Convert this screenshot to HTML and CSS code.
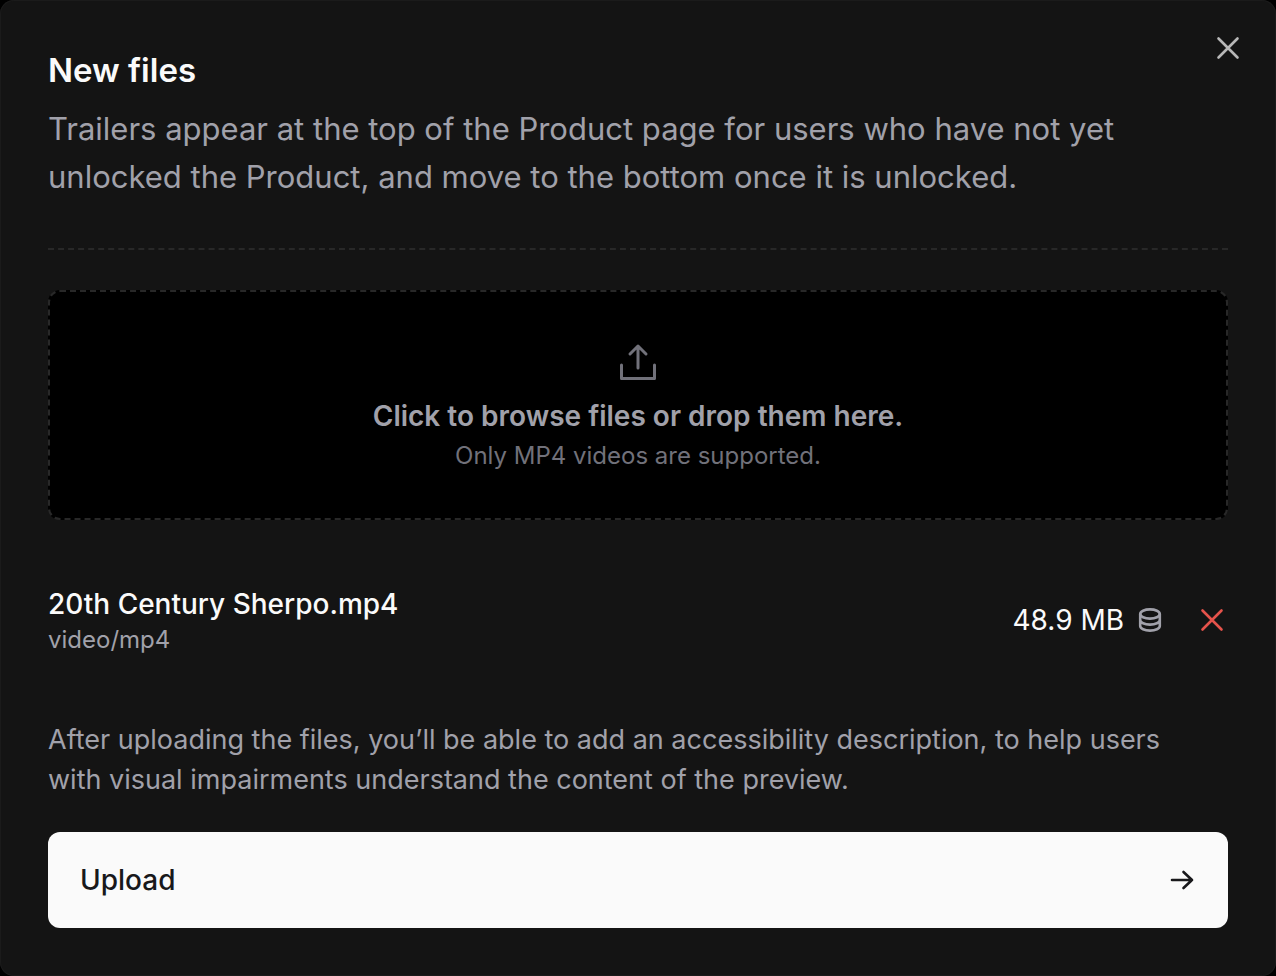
FILE: index.html
```
<!DOCTYPE html>
<html lang="en">
<head>
    <meta charset="UTF-8">
    <meta name="viewport" content="width=device-width, initial-scale=1.0">
    <title>New files</title>
    <link rel="stylesheet" href="styles.css">
</head>
<body>

    <main class="dialog" role="dialog" aria-labelledby="dialog-title">
        <button class="close" type="button" aria-label="Close">
            <svg width="24" height="24" viewBox="0 0 24 24"><path d="M2.5 2.5l19 19M21.5 2.5l-19 19"/></svg>
        </button>

        <!-- Header -->
        <header class="header">
            <h1 id="dialog-title">New files</h1>
            <p>Trailers appear at the top of the Product page for users who have not yet unlocked the Product, and move to the bottom once it is unlocked.</p>
        </header>

        <!-- Drop area -->
        <button class="dropzone" type="button">
            <svg width="40" height="40" viewBox="0 0 40 40"><path d="M20 26V4M12 12l8-8 8 8M3.5 23v13.5h33V23"/></svg>
            <span class="dropzone-title">Click to browse files or drop them here.</span>
            <span class="dropzone-hint">Only MP4 videos are supported.</span>
        </button>

        <!-- Selected file -->
        <div class="file">
            <div class="file-info">
                <div class="file-name">20th Century Sherpo.mp4</div>
                <div class="file-type">video/mp4</div>
            </div>
            <div class="file-size">
                48.9 MB
                <svg width="24" height="24" viewBox="0 0 24 24"><ellipse cx="12" cy="6" rx="9.8" ry="4.6"/><path d="M2.2 6v12c0 2.6 4.4 4.6 9.8 4.6s9.8-2 9.8-4.6V6M2.2 12c0 2.6 4.4 4.6 9.8 4.6s9.8-2 9.8-4.6"/></svg>
            </div>
            <button class="remove" type="button" aria-label="Remove file">
                <svg width="24" height="24" viewBox="0 0 24 24"><path d="M2.5 2.5l19 19M21.5 2.5l-19 19"/></svg>
            </button>
        </div>

        <p class="note">After uploading the files, you’ll be able to add an accessibility description, to help users with visual impairments understand the content of the preview.</p>

        <button class="upload" type="button">
            Upload
            <svg width="24" height="24" viewBox="0 0 24 24"><path d="M2 12h20M13.5 4l8.500 8-8.500 8"/></svg>
        </button>
    </main>

</body>
</html>
```
FILE: styles.css
```
* {
    box-sizing: border-box;
}

body {
    margin: 0;
    background-color: #000;
    font-family: Inter, "Liberation Sans", sans-serif;
    color: #fafafa;
}

button {
    margin: 0;
    padding: 0;
    border: 0;
    background: none;
    color: inherit;
    font: inherit;
    cursor: pointer;
}

svg {
    display: block;
    flex-shrink: 0;
    fill: none;
    stroke: currentColor;
    stroke-width: 2.6;
    stroke-linecap: round;
    stroke-linejoin: round;
}

.dialog {
    position: relative;
    min-height: 100vh;
    padding: 52px 48px 48px;
    background-color: #141414;
    border-radius: 14px;
    box-shadow: inset 0 0 0 1px #1b1b1b;
}

.close {
    position: absolute;
    top: 36px;
    right: 36px;
    color: #b8b8b8;
}

/* Header */
.header {
    padding-bottom: 47px;
    border-bottom: 2px dashed #282828;
}

.header h1 {
    margin: 0 0 17px;
    font-size: 33px;
    line-height: 36px;
    font-weight: 600;
}

.header p {
    margin: 0;
    font-size: 31px;
    line-height: 48px;
    color: #a1a1aa;
}

/* Drop area */
.dropzone {
    display: flex;
    flex-direction: column;
    align-items: center;
    width: 100%;
    margin-top: 40px;
    padding: 50px 24px 44px;
    background-color: #000;
    border: 2px dashed #282828;
    border-radius: 12px;
}

.dropzone svg {
    color: #71717a;
    stroke-width: 3;
}

.dropzone-title {
    margin-top: 14px;
    font-size: 28px;
    line-height: 40px;
    font-weight: 600;
    color: #a1a1aa;
}

.dropzone-hint {
    margin-top: 2px;
    font-size: 24px;
    line-height: 36px;
    color: #71717a;
}

/* Selected file */
.file {
    display: flex;
    align-items: center;
    margin-top: 64px;
    padding-right: 4px;
}

.file-info {
    flex-grow: 1;
}

.file-name {
    font-size: 28px;
    line-height: 40px;
    font-weight: 500;
}

.file-type {
    font-size: 24px;
    line-height: 32px;
    color: #a1a1aa;
}

.file-size {
    display: flex;
    align-items: center;
    gap: 14px;
    font-size: 28px;
    line-height: 40px;
}

.file-size svg {
    color: #a1a1aa;
}

.remove {
    margin-left: 38px;
    color: #e5534b;
}

.note {
    margin: 64px 0 32px;
    padding-right: 24px;
    font-size: 27px;
    line-height: 40px;
    color: #a1a1aa;
}

.upload {
    display: flex;
    align-items: center;
    justify-content: space-between;
    width: 100%;
    padding: 28px 34px 28px 32px;
    background-color: #fafafa;
    border-radius: 12px;
    font-size: 28px;
    line-height: 40px;
    font-weight: 500;
    color: #18181b;
}
```
